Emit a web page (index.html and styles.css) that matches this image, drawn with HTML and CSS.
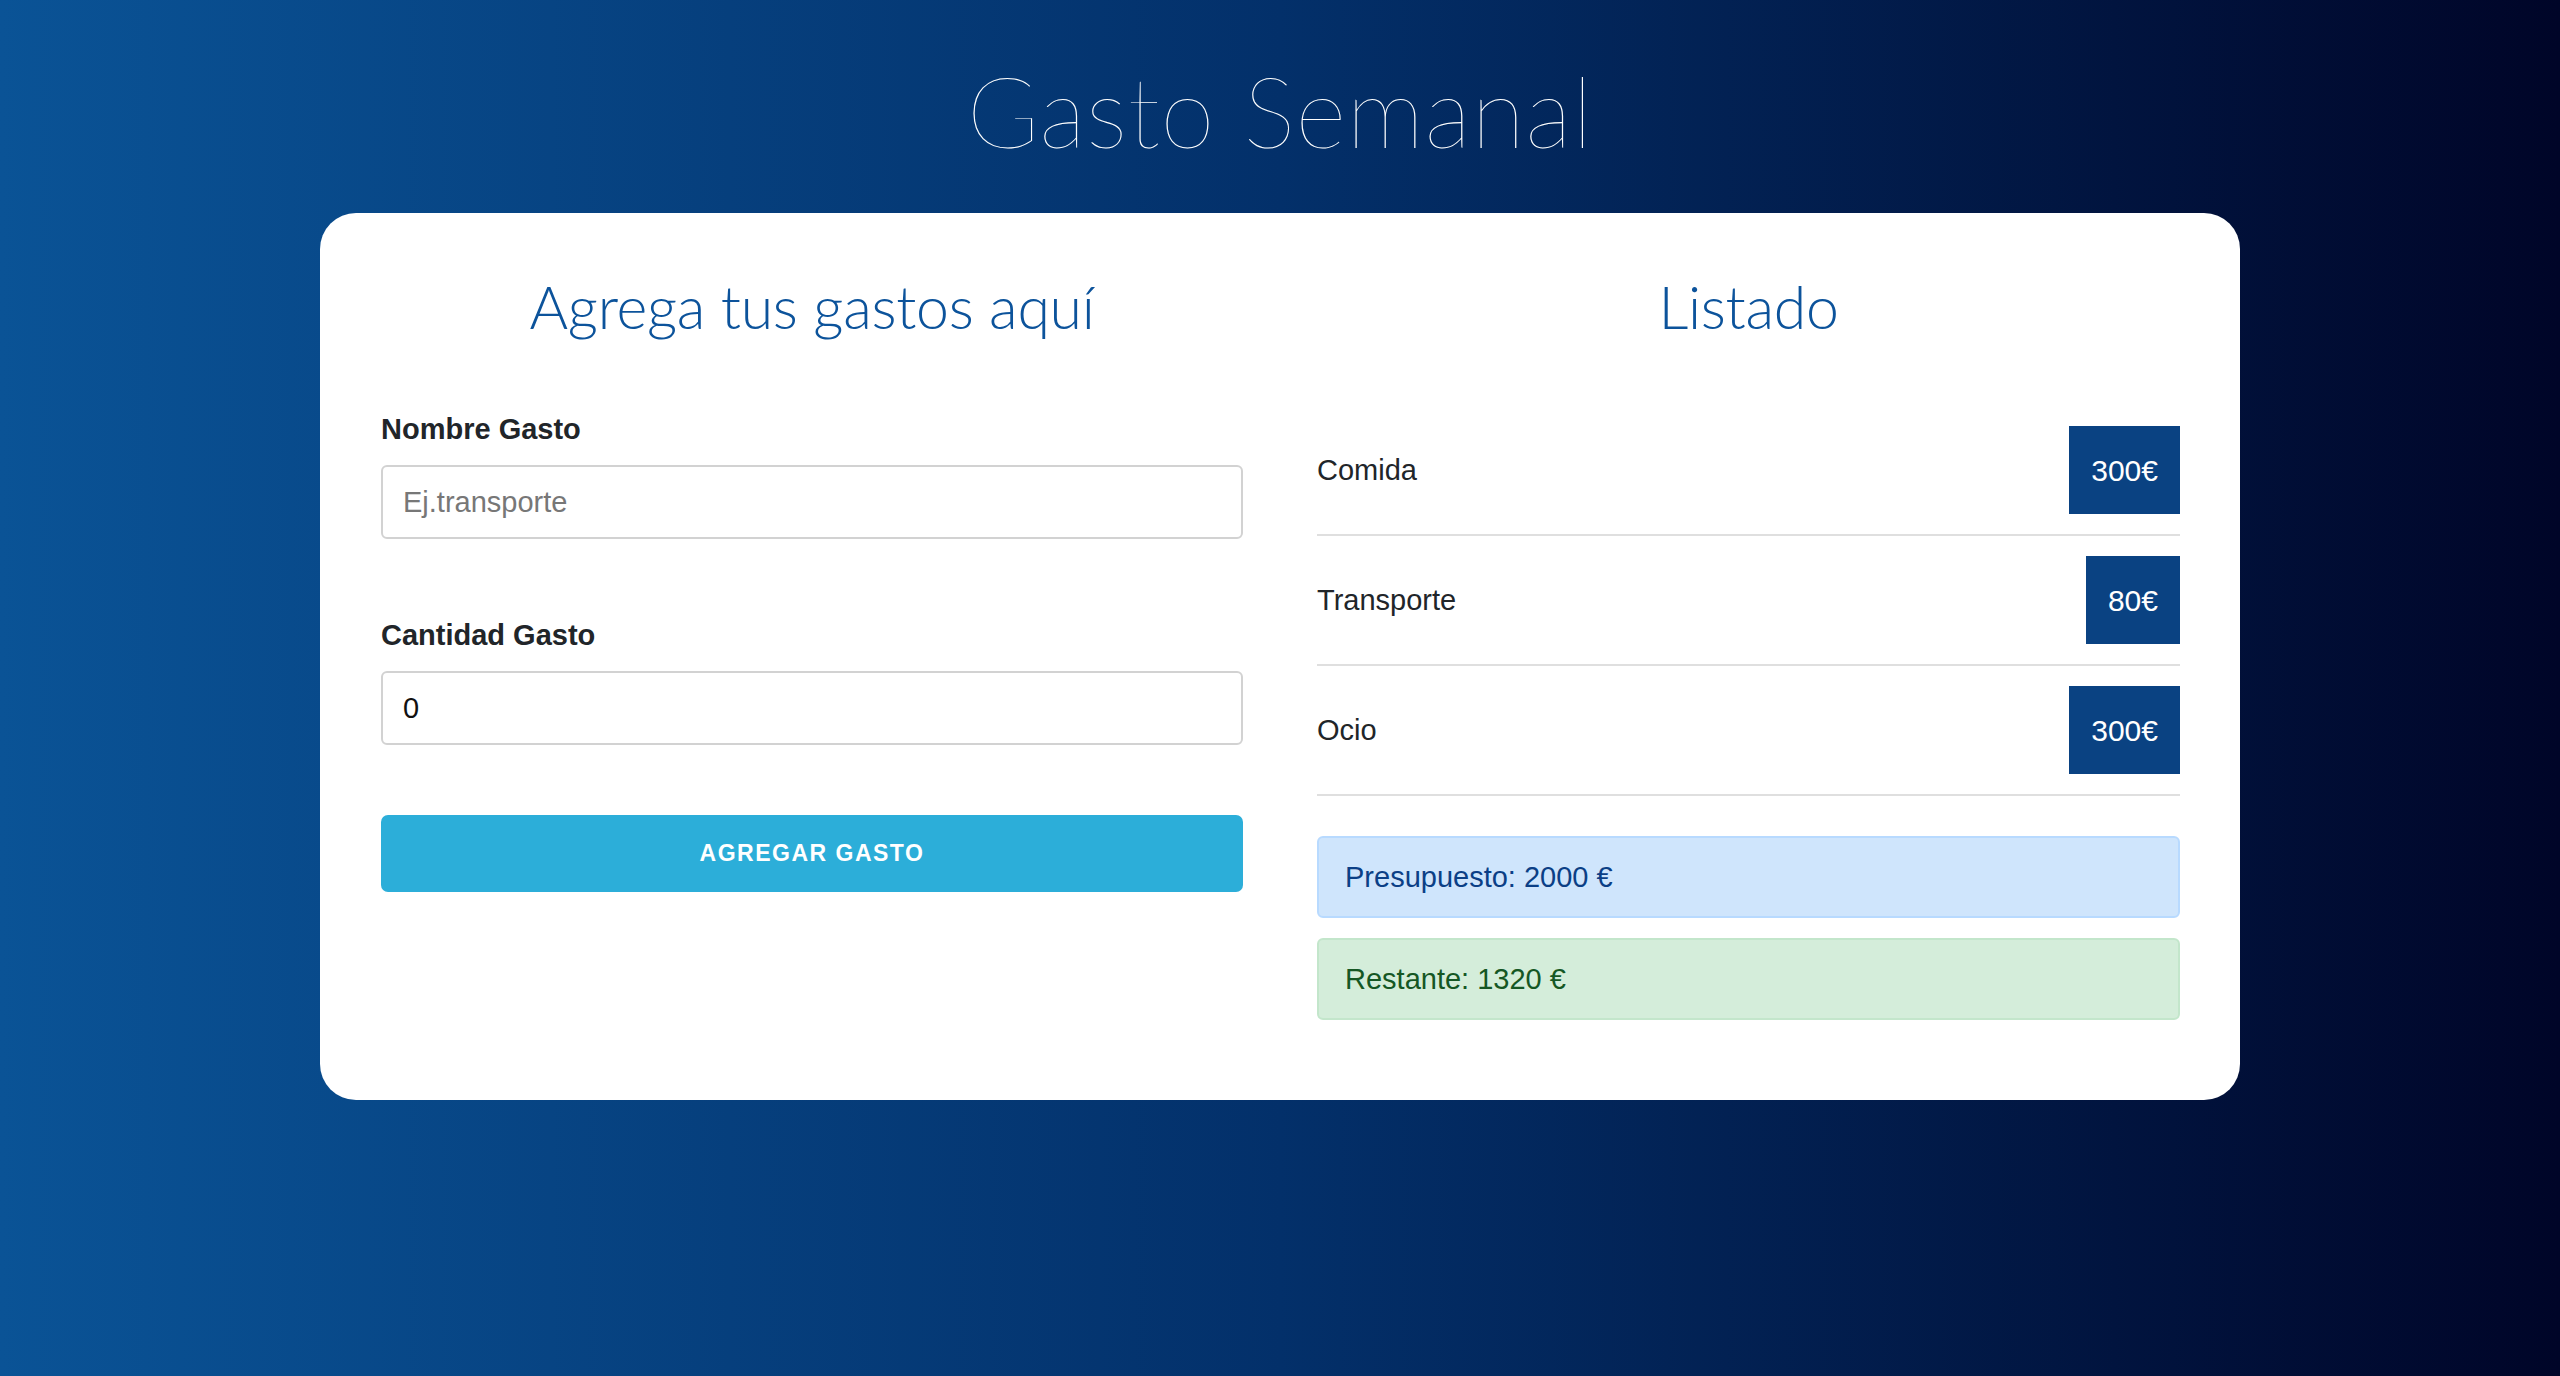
FILE: index.html
```html
<!DOCTYPE html>
<html lang="es">
<head>
<meta charset="utf-8">
<title>Gasto Semanal</title>
<link rel="stylesheet" href="styles.css">
</head>
<body>
<header class="top">
  <h1 class="title">Gasto Semanal</h1>
</header>
<main class="card">
  <section class="col">
    <h2 class="col-title">Agrega tus gastos aquí</h2>
    <form class="form">
      <div class="field">
        <label class="label" for="nombre">Nombre Gasto</label>
        <input class="input" id="nombre" type="text" placeholder="Ej.transporte">
      </div>
      <div class="field">
        <label class="label" for="cantidad">Cantidad Gasto</label>
        <input class="input" id="cantidad" type="text" value="0">
      </div>
      <button class="btn" type="button">Agregar Gasto</button>
    </form>
  </section>
  <section class="col">
    <h2 class="col-title">Listado</h2>
    <ul class="list">
      <li class="item"><span class="item-name">Comida</span><span class="badge">300€</span></li>
      <li class="item"><span class="item-name">Transporte</span><span class="badge">80€</span></li>
      <li class="item"><span class="item-name">Ocio</span><span class="badge">300€</span></li>
    </ul>
    <div class="alert alert-primary">Presupuesto: 2000 €</div>
    <div class="alert alert-success">Restante: 1320 €</div>
  </section>
</main>
</body>
</html>
```
FILE: styles.css
```css
* { box-sizing: border-box; }

html, body {
  margin: 0;
  padding: 0;
}

body {
  min-height: 1376px;
  background: linear-gradient(to right, #0a5396 0%, #03306a 50%, #000528 100%);
  font-family: "Liberation Sans", Arial, sans-serif;
  color: #212529;
}

.top {
  padding-top: 52px;
}

.title {
  margin: 0 0 43px;
  text-align: center;
  font-family: Lato, "Open Sans", sans-serif;
  font-weight: 200;
  font-size: 98px;
  line-height: 1.2;
  letter-spacing: 0.6px;
  color: #ffffff;
}

.card {
  width: 1920px;
  margin: 0 auto;
  background: #ffffff;
  border-radius: 36px;
  padding: 59px 60px 80px 61px;
  display: grid;
  grid-template-columns: 862px 863px;
  column-gap: 74px;
  align-items: start;
}

.col-title {
  margin: 0 0 64px;
  text-align: center;
  font-family: Lato, "Open Sans", sans-serif;
  font-weight: 300;
  font-size: 59px;
  line-height: 1.2;
  letter-spacing: -0.3px;
  color: #0c539b;
}

.form {
  padding-top: 6px;
}

.field {
  margin-bottom: 79px;
}

.field:nth-child(2) {
  margin-bottom: 70px;
}

.label {
  display: block;
  font-weight: bold;
  font-size: 29px;
  line-height: 35px;
  margin-bottom: 18px;
  color: #212529;
}

.input {
  display: block;
  width: 100%;
  height: 74px;
  border: 2px solid #d2d2d2;
  border-radius: 6px;
  padding: 0 20px;
  font-family: "Liberation Sans", Arial, sans-serif;
  font-size: 29px;
  color: #111;
  background: #fff;
  outline: none;
}

.input::placeholder {
  color: #777;
}

.btn {
  display: block;
  width: 100%;
  height: 77px;
  border: none;
  border-radius: 7px;
  background: #2caed9;
  color: #fff;
  font-family: "Liberation Sans", Arial, sans-serif;
  font-weight: bold;
  font-size: 23px;
  letter-spacing: 1.5px;
  text-transform: uppercase;
}

.list {
  list-style: none;
  margin: 0 0 40px;
  padding: 0;
}

.item {
  display: flex;
  justify-content: space-between;
  align-items: center;
  padding: 20px 0;
  border-bottom: 2px solid #dfdfdf;
  font-size: 29px;
  line-height: 35px;
}

.badge {
  display: flex;
  align-items: center;
  height: 88px;
  padding: 0 22px;
  background: #0a4282;
  color: #fff;
  font-size: 30px;
}

.alert {
  border: 2px solid transparent;
  border-radius: 6px;
  padding: 21.5px 26px;
  font-size: 29px;
  line-height: 35px;
}

.alert-primary {
  background: #cfe5fc;
  border-color: #b8daff;
  color: #0b3f86;
  margin-bottom: 20px;
}

.alert-success {
  background: #d4edda;
  border-color: #c3e6cb;
  color: #155724;
}
```
